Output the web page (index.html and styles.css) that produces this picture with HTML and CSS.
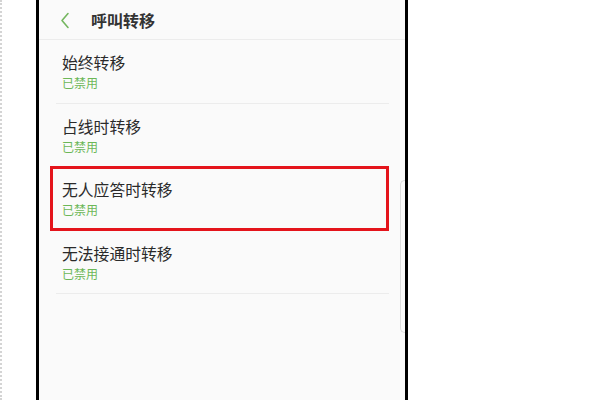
FILE: index.html
```html
<!DOCTYPE html>
<html lang="zh-CN">
<head>
<meta charset="utf-8">
<title>呼叫转移</title>
<link rel="stylesheet" href="styles.css">
</head>
<body>
<div class="page">
  <div class="gutter"></div>
  <div class="phone">
    <div class="screen">
      <header class="bar">
        <svg class="back" width="10" height="17" viewBox="0 0 10 17"><path d="M8 1.5 L2 8.5 L8 15.5" fill="none" stroke="#74b65f" stroke-width="1.6" stroke-linecap="round" stroke-linejoin="round"/></svg>
        <h1 class="title">呼叫转移</h1>
      </header>
      <ul class="list">
        <li class="row"><div class="name">始终转移</div><div class="state">已禁用</div></li>
        <li class="row"><div class="name">占线时转移</div><div class="state">已禁用</div></li>
        <li class="row mark"><div class="name">无人应答时转移</div><div class="state">已禁用</div></li>
        <li class="row"><div class="name">无法接通时转移</div><div class="state">已禁用</div></li>
      </ul>
      <div class="sidekey"></div>
    </div>
  </div>
</div>
</body>
</html>
```
FILE: styles.css
```css
html, body {
  margin: 0;
  padding: 0;
  background: #ffffff;
  font-family: "Noto Sans CJK SC", "Noto Sans", sans-serif;
}
.page {
  display: flex;
  width: 600px;
  height: 400px;
  overflow: hidden;
}
.gutter {
  width: 34px;
  border-left: 2px dotted #d4d4d4;
  flex: none;
}
.phone {
  flex: none;
  border-left: 3px solid #000;
  border-right: 3px solid #000;
}
.screen {
  position: relative;
  width: 366px;
  height: 400px;
  background: #fafafa;
}
.bar {
  height: 39px;
  border-bottom: 1px solid #ececec;
  display: flex;
  align-items: center;
  padding-left: 21px;
}
.back {
  display: block;
  margin-top: 1px;
}
.title {
  margin: 0 0 0 21px;
  font-size: 16px;
  font-weight: 700;
  color: #333;
  line-height: 20px;
}
.list {
  list-style: none;
  margin: 0;
  padding: 0 16px 0 17px;
}
.row {
  position: relative;
  padding: 14px 0 11.5px 6px;
  border-bottom: 1px solid #ececec;
}
.name {
  font-size: 15.8px;
  line-height: 18px;
  color: #2a2a2a;
}
.state {
  margin-top: 3px;
  font-size: 12px;
  line-height: 16px;
  color: #6cb757;
}
.mark::after {
  content: "";
  position: absolute;
  left: -6px;
  right: 0;
  top: -1px;
  bottom: -1px;
  border: 3.5px solid #e4141b;
}
.sidekey {
  position: absolute;
  right: 0;
  top: 180px;
  width: 4px;
  height: 151px;
  border: 1px solid #dcdcdc;
  border-right: none;
  border-radius: 5px 0 0 5px;
}
```
